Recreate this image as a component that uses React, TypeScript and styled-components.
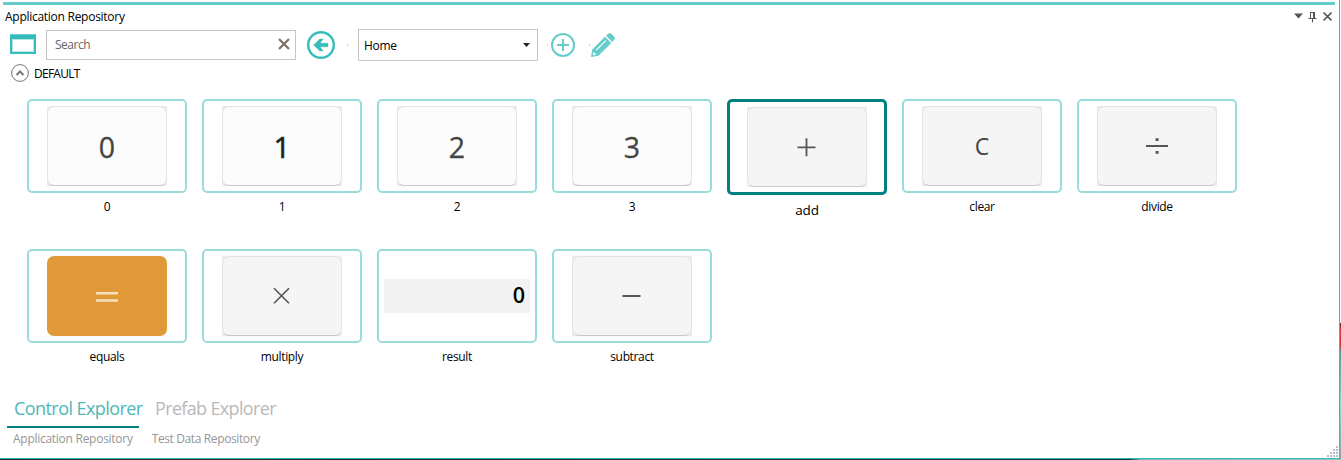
import React from "react";
import styled, { createGlobalStyle } from "styled-components";

const GlobalStyle = createGlobalStyle`
  * { box-sizing: border-box; }
  body {
    margin: 0;
    background: #fff;
    overflow: hidden;
    font-family: "Open Sans", "Noto Sans", sans-serif;
    font-size: 12px;
    color: #000;
  }
`;

const Desktop = styled.div`
  display: grid;
  grid-template-columns: 1340px 1px;
  grid-template-rows: 459px 1px;
  width: 1341px;
  height: 460px;
`;

const Panel = styled.main`
  position: relative;
  display: flex;
  flex-direction: column;
  border-right: 1px solid #2fbcbc;
  border-bottom: 1px solid #2fbcbc;
  background: #fff;
`;

const RightEdge = styled.div`
  background: linear-gradient(
    #fff 323px, #7d2424 323px, #e04040 332px, #c33 346px,
    #6a9c9c 352px, #7fb5b5 385px, #8ed6d6 400px, #8fa9a9 459px
  );
`;

const BottomEdge = styled.div`
  grid-column: 1 / -1;
  background: linear-gradient(90deg, #152a2a, #3a2520 160px, #1c2626 340px, #183232 1130px, #8fb0b0 1140px, #a0bcbc);
`;

const AccentBar = styled.div`
  height: 3px;
  margin: 2px 4px 0 3px;
  background: #66cccb;
`;

const Text = styled.span<{ $spacing?: number }>`
  white-space: nowrap;
  letter-spacing: ${(p) => p.$spacing ?? -0.27}px;
`;

const TitleBar = styled.header`
  display: flex;
  align-items: center;
  justify-content: space-between;
  height: 23px;
  padding: 0 7px 0 5px;
`;

const Toolbar = styled.div`
  display: flex;
  align-items: center;
  height: 34px;
  padding-left: 9px;
`;

const SearchBox = styled.div`
  display: flex;
  align-items: center;
  justify-content: space-between;
  width: 250px;
  height: 30px;
  margin: 0 10px 0 9px;
  padding: 0 5px 2px 8px;
  border: 1px solid #c6c6c6;
  color: #666;
`;

const SelectBox = styled.div`
  display: flex;
  align-items: center;
  justify-content: space-between;
  width: 180px;
  height: 32px;
  margin: 0 9px 0 10px;
  padding: 0 7px 0 5px;
  border: 1px solid #c6c6c6;
`;

const Speck = styled.i`
  width: 1px;
  height: 2px;
  background: #a5e0df;
`;

const Spacer = styled.span<{ $w: number }>`
  width: ${(p) => p.$w}px;
`;

const GroupHeader = styled.div`
  display: flex;
  align-items: center;
  gap: 4px;
  height: 22px;
  padding-left: 10px;
`;

const TileGrid = styled.section`
  display: grid;
  grid-template-columns: repeat(7, 160px);
  grid-auto-rows: 150px;
  column-gap: 15px;
  height: 300px;
  margin: 15px 0 0 27px;
`;

const Tile = styled.div`
  display: flex;
  flex-direction: column;
  align-items: center;
`;

const Frame = styled.div<{ $selected?: boolean }>`
  display: flex;
  align-items: center;
  justify-content: center;
  width: 160px;
  height: ${(p) => (p.$selected ? 96 : 94)}px;
  border: ${(p) => (p.$selected ? "3px solid #008080" : "2px solid #99dddb")};
  border-radius: 5px;
`;

const TileLabel = styled.div<{ $selected?: boolean }>`
  margin-top: ${(p) => (p.$selected ? 6 : 5)}px;
  font-size: ${(p) => (p.$selected ? 13.5 : 12)}px;
  line-height: 18px;
  letter-spacing: ${(p) => (p.$selected ? -0.1 : -0.35)}px;
`;

const KeyBack = styled.div<{ $accent?: boolean }>`
  width: 120px;
  height: 80px;
  background: ${(p) => (p.$accent ? "#fff" : "#ededed")};
`;

const KeyFace = styled.div<{ $fill: string; $accent?: boolean }>`
  display: flex;
  align-items: center;
  justify-content: center;
  width: 100%;
  height: 100%;
  border: ${(p) => (p.$accent ? "none" : "1px solid #e4e4e4")};
  border-bottom-color: #c9c9c9;
  border-radius: 7px;
  background: ${(p) => p.$fill};
`;

const Digit = styled.span<{ $dark?: boolean }>`
  padding-top: 2px;
  font-size: 28.5px;
  line-height: 40px;
  color: ${(p) => (p.$dark ? "#222" : "#444")};
  -webkit-text-stroke: ${(p) => (p.$dark ? "0.7px #222" : "0.3px #444")};
`;

const Letter = styled(Digit)`
  padding: 0 0 1px;
  font-size: 23px;
  -webkit-text-stroke: 0;
`;

const ResultStrip = styled.div`
  display: flex;
  align-items: center;
  justify-content: flex-end;
  width: 146px;
  height: 34px;
  padding: 0 5px 4px 0;
  background: #f2f2f2;
  color: #000;
  font-size: 21.5px;
  font-weight: 600;
`;

const ExplorerTabs = styled.nav`
  display: flex;
  gap: 9px;
  height: 29px;
  padding-left: 7px;
`;

const ExplorerTab = styled.div<{ $active?: boolean }>`
  width: ${(p) => (p.$active ? 132 : 130)}px;
  height: 29px;
  padding-left: 7px;
  border-bottom: 2px solid ${(p) => (p.$active ? "#008080" : "transparent")};
  color: ${(p) => (p.$active ? "#4db8b7" : "#b9b9b9")};
  font-size: 18px;
  line-height: 19px;
`;

const DockTabs = styled.footer`
  display: flex;
  gap: 19px;
  padding: 2px 0 0 13px;
  line-height: 18px;
  color: #969696;
`;

const Grip = styled.svg`
  position: absolute;
  right: 0;
  bottom: 0;
`;

const WindowIcon = () => (
  <svg width="28" height="24" viewBox="0 0 28 24">
    <rect x="1" y="1" width="26" height="20" fill="#36bdbb" />
    <rect x="1" y="1" width="26" height="1" fill="#6dd0ce" />
    <rect x="3.5" y="6.5" width="21" height="12" fill="#fff" stroke="#b4e6e5" />
  </svg>
);

const BackIcon = () => (
  <svg width="30" height="30" viewBox="0 0 30 30">
    <circle cx="15" cy="15" r="12.8" fill="none" stroke="#36bdbb" strokeWidth="2.4" />
    <path d="M7.6 15 L13.8 9 H17.2 L14 13.2 H22 V16.8 H14 L17.2 21 H13.8 Z" fill="#36bdbb" stroke="#36bdbb" strokeWidth=".4" />
  </svg>
);

const AddIcon = () => (
  <svg width="26" height="26" viewBox="0 0 26 26">
    <circle cx="13" cy="13" r="11" fill="none" stroke="#66cccb" strokeWidth="2" />
    <path d="M13 7v12M7 13h12" stroke="#66cccb" strokeWidth="2" />
  </svg>
);

const PencilIcon = () => (
  <svg width="26" height="26" viewBox="0 0 26 26">
    <g fill="#66cccb">
      <path d="M1 25 L2.2 17.6 L15 4.8 L21.3 11 L8.4 23.8 Z" />
      <path d="M16 3.8 L18.4 1.6 Q19.8 .5 21.4 1.8 L24.3 4.7 Q25.6 6.3 24.4 7.6 L22.2 10 Z" />
    </g>
    <path d="M6.2 18.2 L15.8 8.6" stroke="#fff" strokeWidth="1.1" />
    <path d="M3.4 19.6 L6.4 22.6 L3.6 23.4 L2.7 22.4 Z" fill="#e6f7f7" />
  </svg>
);

const CollapseIcon = () => (
  <svg width="20" height="20" viewBox="0 0 20 20" fill="none">
    <circle cx="10" cy="10" r="8.4" stroke="#777" />
    <path d="M6.5 12 L10 8.5 L13.5 12" stroke="#777" strokeWidth="2" />
  </svg>
);

const ClearIcon = () => (
  <svg width="12" height="12" viewBox="0 0 12 12">
    <path d="M1 1l10 10M11 1L1 11" stroke="#7a746c" strokeWidth="2.3" />
  </svg>
);

const DropIcon = () => (
  <svg width="7" height="4" viewBox="0 0 7 4">
    <path d="M0 0h7L3.5 4z" fill="#222" />
  </svg>
);

const CaptionButtons = () => (
  <svg width="40" height="14" viewBox="0 0 40 14">
    <path d="M2 3.5h9L6.5 8.5z" fill="#555" />
    <path d="M18.5 2v7M18 2.5h5M16.5 8.5h8M20.5 9v3.5" stroke="#555" fill="none" />
    <path d="M22 2v7" stroke="#555" strokeWidth="2" />
    <path d="M31.5 2.5l8 8M39.5 2.5l-8 8" stroke="#555" strokeWidth="1.7" />
  </svg>
);

const signPaths: Record<string, React.ReactNode> = {
  add: <path d="M19.5 11.3v18M10.5 20.3h18" strokeWidth="1.8" />,
  divide: (
    <>
      <path d="M9 20h22" strokeWidth="2" />
      <path d="M18.6 13.6h3M18.6 26.4h3" strokeWidth="2.8" />
    </>
  ),
  multiply: <path d="M12 12.3l15 15M27 12.3l-15 15" strokeWidth="1.6" />,
  subtract: <path d="M10.5 20h18" strokeWidth="2" />,
  equals: <path d="M9 17.3h22M9 24.5h22" strokeWidth="2.6" />,
};

const Sign = ({ name }: { name: string }) => (
  <svg width="40" height="40" viewBox="0 0 40 40" fill="none" stroke={name === "equals" ? "#f6dfc0" : "#555"}>
    {signPaths[name]}
  </svg>
);

const TilePicture = ({ name }: { name: string }) => {
  if (name === "result") return <ResultStrip>0</ResultStrip>;
  const accent = name === "equals";
  const digit = /^\d$/.test(name);
  const fill = accent ? "#e09938" : digit ? "#fcfcfc" : "#f5f5f5";
  return (
    <KeyBack $accent={accent}>
      <KeyFace $fill={fill} $accent={accent}>
        {digit ? <Digit $dark={name === "1"}>{name}</Digit> : name === "clear" ? <Letter>C</Letter> : <Sign name={name} />}
      </KeyFace>
    </KeyBack>
  );
};

const controls = ["0", "1", "2", "3", "add", "clear", "divide", "equals", "multiply", "result", "subtract"];

const gripDots = [0, 1, 2, 3].flatMap((row) =>
  Array.from({ length: row + 1 }, (_, i) => ({ x: 11 - i * 3, y: 1 + row * 3 }))
);

export default function App() {
  return (
    <>
      <GlobalStyle />
      <Desktop>
        <Panel>
          <AccentBar />
          <TitleBar>
            <Text>Application Repository</Text>
            <CaptionButtons />
          </TitleBar>
          <Toolbar>
            <WindowIcon />
            <SearchBox>
              <Text $spacing={-0.5}>Search</Text>
              <ClearIcon />
            </SearchBox>
            <BackIcon />
            <Spacer $w={11} />
            <Speck />
            <SelectBox>
              <Text>Home</Text>
              <DropIcon />
            </SelectBox>
            <Speck />
            <Spacer $w={2} />
            <AddIcon />
            <Spacer $w={13} />
            <Speck />
            <PencilIcon />
          </Toolbar>
          <GroupHeader>
            <CollapseIcon />
            <Text $spacing={-0.75}>DEFAULT</Text>
          </GroupHeader>
          <TileGrid>
            {controls.map((name) => (
              <Tile key={name}>
                <Frame $selected={name === "add"}>
                  <TilePicture name={name} />
                </Frame>
                <TileLabel $selected={name === "add"}>{name}</TileLabel>
              </Tile>
            ))}
          </TileGrid>
          <ExplorerTabs>
            <ExplorerTab $active>
              <Text $spacing={-0.57}>Control Explorer</Text>
            </ExplorerTab>
            <ExplorerTab>
              <Text $spacing={-0.65}>Prefab Explorer</Text>
            </ExplorerTab>
          </ExplorerTabs>
          <DockTabs>
            <Text>Application Repository</Text>
            <Text $spacing={-0.38}>Test Data Repository</Text>
          </DockTabs>
          <Grip width="14" height="13" viewBox="0 0 14 13">
            {gripDots.map((d) => (
              <rect key={`${d.x}-${d.y}`} x={d.x} y={d.y} width="2" height="2" fill="#b9bccb" />
            ))}
          </Grip>
        </Panel>
        <RightEdge />
        <BottomEdge />
      </Desktop>
    </>
  );
}
